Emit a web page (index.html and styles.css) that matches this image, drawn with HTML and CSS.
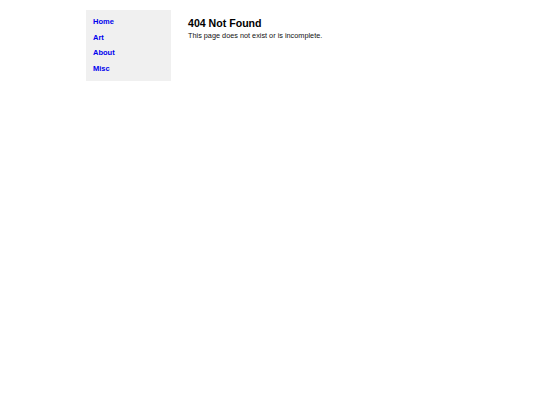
FILE: index.html
```html
<!DOCTYPE html>
<html>
<head>
<meta charset="utf-8">
<link rel="stylesheet" href="styles.css">
</head>
<body>
<div class="page">
  <nav class="sidebar">
    <a href="#">Home</a>
    <a href="#">Art</a>
    <a href="#">About</a>
    <a href="#">Misc</a>
  </nav>
  <main class="content">
    <h1>404 Not Found</h1>
    <p>This page does not exist or is incomplete.</p>
  </main>
</div>
</body>
</html>
```
FILE: styles.css
```css
html, body { margin: 0; padding: 0; background: #fff; }
body { font-family: "Liberation Sans", Arial, sans-serif; color: #000; }
.page {
  width: 368px;
  margin: 10px auto 0;
  display: flex;
  align-items: flex-start;
}
.sidebar {
  width: 78px;
  background: #f0f0f0;
  padding: 4px 0 4px 7px;
  display: flex;
  flex-direction: column;
}
.sidebar a {
  color: #0000ee;
  font-weight: bold;
  font-size: 7.5px;
  line-height: 15.7px;
  text-decoration: none;
}
.content { padding-left: 17px; }
.content h1 {
  font-size: 10.6px;
  margin: 7.3px 0 0;
  line-height: 12.5px;
}
.content p {
  font-size: 7.3px;
  margin: 0.8px 0 0;
  line-height: 9px;
  color: #111;
}
```
